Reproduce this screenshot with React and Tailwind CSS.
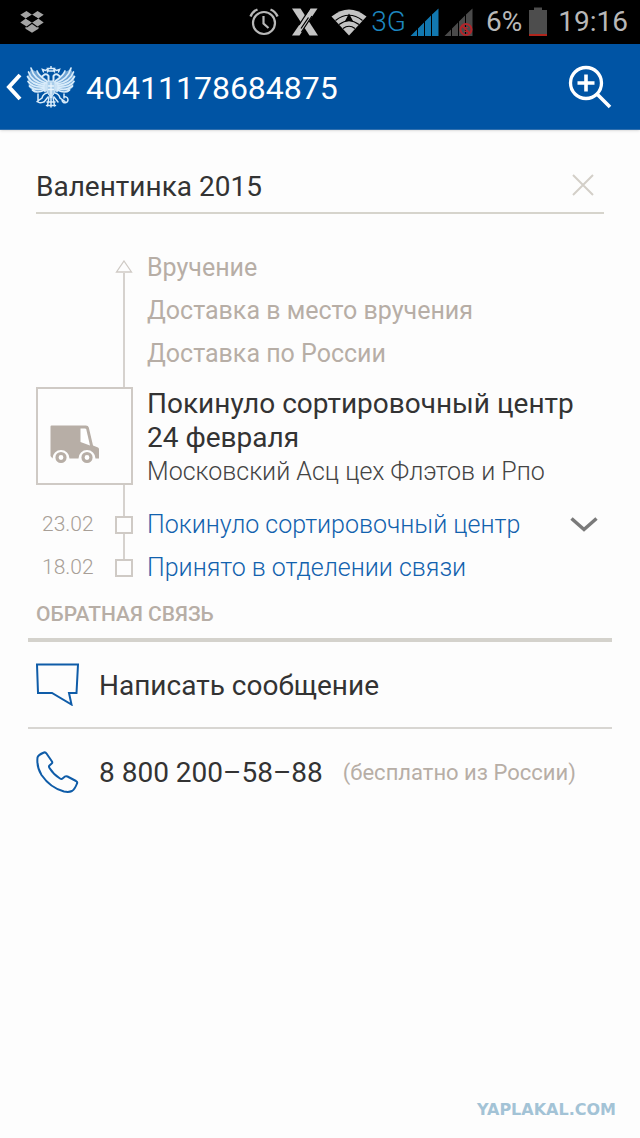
import { useState } from 'react';

const upcoming = ['Вручение', 'Доставка в место вручения', 'Доставка по России'];

const history = [
  { date: '23.02', title: 'Покинуло сортировочный центр', expandable: true },
  { date: '18.02', title: 'Принято в отделении связи', expandable: false },
];

function DropboxIcon() {
  return (
    <svg width="24" height="22" viewBox="0 0 24 22" fill="#a3a3a3">
      <path d="M6.5 0 12 3.8 5.8 7.6 0.3 3.8zM17.5 0 12 3.8 18.2 7.6 23.7 3.8zM5.8 7.6 12 11.6 6.5 15.4 0.3 11.6zM18.2 7.6 12 11.6 17.5 15.4 23.7 11.6z" />
      <path d="M12 13 17 16.4 18.5 15.8 18.5 17.8 12 21.8 5.5 17.8 5.5 15.8 7 16.4z" />
      <path d="M12 3.8 18.2 7.6 12 11.6 5.8 7.6z" fill="#000" />
    </svg>
  );
}

function AlarmIcon() {
  return (
    <svg width="30" height="28" viewBox="0 0 30 28" fill="none" stroke="#b8b8b8">
      <circle cx="15" cy="15" r="11" strokeWidth="2.2" />
      <path d="M14.5 8v7.5l5 4.5" strokeWidth="2.2" />
      <path d="M1.5 8.5Q3.5 3.5 8.5 1.5M28.5 8.5Q26.5 3.5 21.5 1.5" strokeWidth="2.4" />
    </svg>
  );
}

function XIcon() {
  return (
    <svg width="28" height="28" viewBox="0 0 28 28">
      <path d="M1 0.500h8.500L27 27.500h-8.500z" fill="#c4c4c4" />
      <path d="M19.500 0.500h7L8.500 27.500H1z" fill="#c4c4c4" />
      <path d="M18.500 1 8 17M21 8 10.500 24M17.500 9.500 10 20.500" stroke="#000" strokeWidth="1.300" />
    </svg>
  );
}

function WifiIcon() {
  return (
    <svg width="36" height="27" viewBox="0 0 36 27">
      <path d="M0.500 7.500Q18-6.500 35.500 7.500L18 26.500z" fill="#c4c4c4" />
      <path d="M4.500 11.500Q18 1 31.500 11.500M8 15.500Q18 8 28 15.500M12 19.500Q18 15 24 19.500" fill="none" stroke="#000" strokeWidth="1.200" />
      <path d="M18 4.500 22 12h-8z" fill="#000" />
    </svg>
  );
}

function SignalIcon({ color, blocked }) {
  return (
    <svg width="30" height="28" viewBox="0 0 30 28">
      <path d="M0.500 28 7 21.500V28zM8 20.500l6-6V28H8zM15 13.500l6-6V28h-6zM22 6.500l6.500-6V28H22z" fill={color} />
      {blocked && (
        <g fill="none" stroke="#b3242a" strokeWidth="2">
          <circle cx="22" cy="21.500" r="5.500" />
          <path d="M18 17.500l8 8" strokeWidth="1.800" />
          <path d="M24 19.500h-3M20 23.500h3" strokeWidth="1.200" />
        </g>
      )}
    </svg>
  );
}

function BatteryIcon() {
  return (
    <svg width="20" height="30" viewBox="0 0 20 30">
      <path d="M6 0.500h8V3h5v24H1V3h5z" fill="#4d4d4d" />
      <path d="M1 27h18v2H1z" fill="#b0251c" />
    </svg>
  );
}

function EagleLogo() {
  return (
    <svg width="50" height="42" viewBox="0 0 50 42" fill="none" stroke="#d9ecfa" strokeLinecap="round">
      {/* wings */}
      <path d="M5 3 1.500 11 3 21l5 5 12-1 1-11L11 6zM45 3l3.500 8L47 21l-5 5-12-1-1-11L39 6z" fill="#6da3d4" stroke="none" />
      <g strokeWidth="1.700">
        <path d="M20 17Q8 13 5 2M18.500 18Q6 16 2.500 6M18 19.500Q6 19 1.500 10.500M18 21Q7 22 2 15.500M18 22.500Q9 25 3.500 20M18.500 24Q11 28 6.500 24" />
        <path d="M20.500 15Q13 10 11 5M21 15.500v9M19 17.500v8" />
      </g>
      <g strokeWidth="1.700">
        <path d="M30 17Q42 13 45 2M31.500 18Q44 16 47.500 6M32 19.500Q44 19 48.500 10.500M32 21Q43 22 48 15.500M32 22.500Q41 25 46.500 20M31.500 24Q39 28 43.500 24" />
        <path d="M29.500 15Q37 10 39 5M29 15.500v9M31 17.500v8" />
      </g>
      {/* heads and crowns */}
      <g strokeWidth="1.500">
        <path d="M22.500 15V10Q21 7.500 18.500 8.500L16 10.500M27.500 15V10Q29 7.500 31.500 8.500L34 10.500" strokeWidth="2" />
        <path d="M17.500 6l-1-2.500 3 1 2-1.500V6M32.500 6l1-2.500-3 1-2-1.500V6M22.500 5h5l1-2.500h-7zM25 2.500V0.500" />
      </g>
      {/* body, legs and tail */}
      <path d="M22 15h6l1 2v9l-4 6-4-6v-9z" fill="#a9cdea" strokeWidth="1" />
      <path d="M25 17v11M22.500 20h5M22.500 23.500h5" stroke="#e9f5fd" strokeWidth="1.300" />
      <path d="M21 27Q17 28 16 32L11 35.500M29 27Q33 28 34 32L39 35.500M12 28v8q3 2 7-1M38 28v4M36 34a3 3 0 1 0 2-3M22 31l-4 5M28 31l4 5" strokeWidth="1.500" />
      <path d="M25 29v12M23 31l-1.500 9M27 31l1.500 9M21 36h8M20.500 39.500h9" strokeWidth="1.500" />
    </svg>
  );
}

function VanIcon() {
  return (
    <svg width="50" height="39" viewBox="0 0 50 39">
      <path d="M1.500 0.500H36q2.200 0 2.800 2L43 20.500l5 2q1 0.500 1 1.500v9.500h-3.500a8.500 8.500 0 0 0-17 0h-9a8.500 8.500 0 0 0-17 0L0.500 31V1.500q0-1 1-1z" fill="#b7aea6" />
      <path d="M30.500 3.500h4.500q1 0 1.300 1l3.700 16-9.500-3.500z" fill="#fff" />
      <g fill="#fff" stroke="#b7aea6" strokeWidth="3.200">
        <circle cx="11" cy="32.500" r="4" />
        <circle cx="37" cy="32.500" r="4" />
      </g>
    </svg>
  );
}

function StatusBar() {
  return (
    <div className="flex h-11 items-center justify-between bg-black pl-5 pr-3 text-[28px] text-[#b8b8b8]">
      <DropboxIcon />
      <div className="flex items-center">
        <div className="flex items-center gap-3">
          <AlarmIcon />
          <XIcon />
          <WifiIcon />
        </div>
        <span className="mx-1 font-light text-[#1d86bf]">3G</span>
        <div className="flex items-center gap-1">
          <SignalIcon color="#1278b0" />
          <SignalIcon color="#4a4a4a" blocked />
        </div>
        <span className="ml-3 mr-1.5">6%</span>
        <BatteryIcon />
        <span className="ml-2.5">19:16</span>
      </div>
    </div>
  );
}

function Header() {
  return (
    <header className="flex h-[86px] items-center border-b border-[#2f6fae] bg-[#0054a4] pl-1.5 pr-7 text-white shadow-sm">
      <button type="button" aria-label="Назад" className="flex items-center gap-1">
        <svg width="16" height="28" viewBox="0 0 16 28" fill="none" stroke="#fff" strokeWidth="4">
          <path d="M14 2 3 14l11 12" />
        </svg>
        <EagleLogo />
      </button>
      <h1 className="ml-2.5 flex-1 pt-0.5 text-[32px]">40411178684875</h1>
      <button type="button" aria-label="Увеличить">
        <svg width="44" height="44" viewBox="0 0 44 44" fill="none" stroke="#fff" strokeWidth="3.600">
          <circle cx="18" cy="18" r="15.500" strokeWidth="3.300" />
          <path d="M18 9.500v17M9.500 18h17M29 29l13 13" />
        </svg>
      </button>
    </header>
  );
}

function Timeline() {
  return (
    <ol className="mt-8 px-9">
      {upcoming.map((title, i) => (
        <li key={title} className="flex h-[43px] items-center">
          <div className="flex h-full w-[97px] flex-col items-end">
            {i === 0 ? (
              <div className="flex h-full w-[18px] flex-col items-center pt-3.5">
                <svg width="18" height="13" viewBox="0 0 18 13" fill="none" stroke="#cfcac5" strokeWidth="1.300">
                  <path d="M9 1 16.500 12H1.500z" />
                </svg>
                <div className="w-0.5 flex-1 bg-[#d6d2ce]" />
              </div>
            ) : (
              <div className="mr-2 w-0.5 flex-1 bg-[#d6d2ce]" />
            )}
          </div>
          <span className="ml-3.5 text-[25px] text-[#b7aea6]">{title}</span>
        </li>
      ))}

      {/* Current status */}
      <li className="flex h-32">
        <div className="flex w-[97px] flex-col items-end">
          <div className="mr-2 h-3 w-0.5 bg-[#d6d2ce]" />
          <div className="flex h-[98px] w-full items-center border-2 border-[#cfcac5] pl-3 pt-4">
            <VanIcon />
          </div>
          <div className="mr-2 w-0.5 flex-1 bg-[#d6d2ce]" />
        </div>
        <div className="ml-3.5 flex-1 pt-3">
          <h2 className="text-[28px] leading-[34px] text-[#333333]">
            Покинуло сортировочный центр
            <br />
            24 февраля
          </h2>
          <p className="text-[25px] font-light leading-[34px] text-[#444444]">Московский Асц цех Флэтов и Рпо</p>
        </div>
      </li>

      {history.map((item, i) => (
        <li key={item.date} className="flex h-[43px] items-center">
          <div className="flex h-full w-[97px] items-center justify-between pl-1.5">
            <time className="text-[21px] font-light text-[#a89f97]">{item.date}</time>
            <div className="flex h-full w-[18px] flex-col items-center">
              <div className="w-0.5 flex-1 bg-[#d6d2ce]" />
              <div className="h-[18px] w-[18px] border-2 border-[#cfcac5]" />
              <div className={i < history.length - 1 ? 'w-0.5 flex-1 bg-[#d6d2ce]' : 'flex-1'} />
            </div>
          </div>
          <a href="#" className="ml-3.5 flex-1 whitespace-nowrap text-[25px] font-light text-[#1262ae]">
            {item.title}
          </a>
          {item.expandable && (
            <button type="button" aria-label="Показать подробности" className="mr-1.5">
              <svg width="28" height="16" viewBox="0 0 28 16" fill="none" stroke="#7a7a7a" strokeWidth="3.500">
                <path d="M1.500 1.500 14 12.500l12.500-11" />
              </svg>
            </button>
          )}
        </li>
      ))}
    </ol>
  );
}

function Feedback() {
  return (
    <section className="mt-2 px-7">
      <h2 className="px-2 pb-[7px] text-[21px] font-medium leading-[34px] text-[#b7aea6]">ОБРАТНАЯ СВЯЗЬ</h2>
      <div className="border-t-4 border-[#d4d2cc]">
        <a href="#" className="flex h-[87px] items-center border-b-2 border-[#d8d6d2] px-2">
          <svg width="43" height="43" viewBox="0 0 43 43" fill="none" stroke="#0f5ca8" strokeWidth="2">
            <path d="M1 1.500h41L40.500 30H33l2.500 11.500L16 30H2z" />
          </svg>
          <span className="ml-5 pt-0.5 text-[28px] text-[#333333]">Написать сообщение</span>
        </a>
        <a href="tel:88002005888" className="flex h-[87px] items-center px-2">
          <svg width="43" height="43" viewBox="0 0 43 43" fill="none" stroke="#0f5ca8" strokeWidth="2" strokeLinejoin="round">
            <path d="M1.500 6.500Q2 4 8 1.500q1.500-0.500 2.500 1l5.500 8q0.700 1.200-0.300 2l-2.200 2q-1 1 0 2.500 4 6.500 10.500 10.500 1.500 1 2.500 0l2.500-2q1-0.700 2.500 0l8.500 4.500q1.700 1 1 2.500-2 5.500-5 7.500-3 1.500-8 0.500Q14.500 37 5.500 24 0.500 16 1.500 6.500z" />
          </svg>
          <span className="ml-5 text-[28px] text-[#333333]">8 800 200–58–88</span>
          <span className="ml-5 text-[22px] text-[#b7aea6]">(бесплатно из России)</span>
        </a>
      </div>
    </section>
  );
}

export default function App() {
  const [name, setName] = useState('Валентинка 2015');

  return (
    <div className="flex min-h-screen flex-col bg-[#fdfdfd] font-[Roboto,sans-serif]">
      <StatusBar />
      <Header />

      <main>
        <div className="mx-9 mt-7 flex h-14 items-center border-b-2 border-[#d6d4cc]">
          <input
            type="text"
            aria-label="Название отправления"
            value={name}
            onChange={(e) => setName(e.target.value)}
            className="min-w-0 flex-1 bg-transparent pt-1 text-[28px] text-[#333333] outline-none"
          />
          <button type="button" aria-label="Очистить" onClick={() => setName('')} className="mr-2.5">
            <svg width="22" height="22" viewBox="0 0 22 22" fill="none" stroke="#d3cfc8" strokeWidth="2">
              <path d="M1 1l20 20M21 1 1 21" />
            </svg>
          </button>
        </div>
        <Timeline />
        <Feedback />
      </main>

      <footer className="mt-auto pb-4 pr-6 text-right font-['DejaVu_Sans',sans-serif] text-[16px] font-bold text-[#a3c3d6]">
        YAPLAKAL.COM
      </footer>
    </div>
  );
}
